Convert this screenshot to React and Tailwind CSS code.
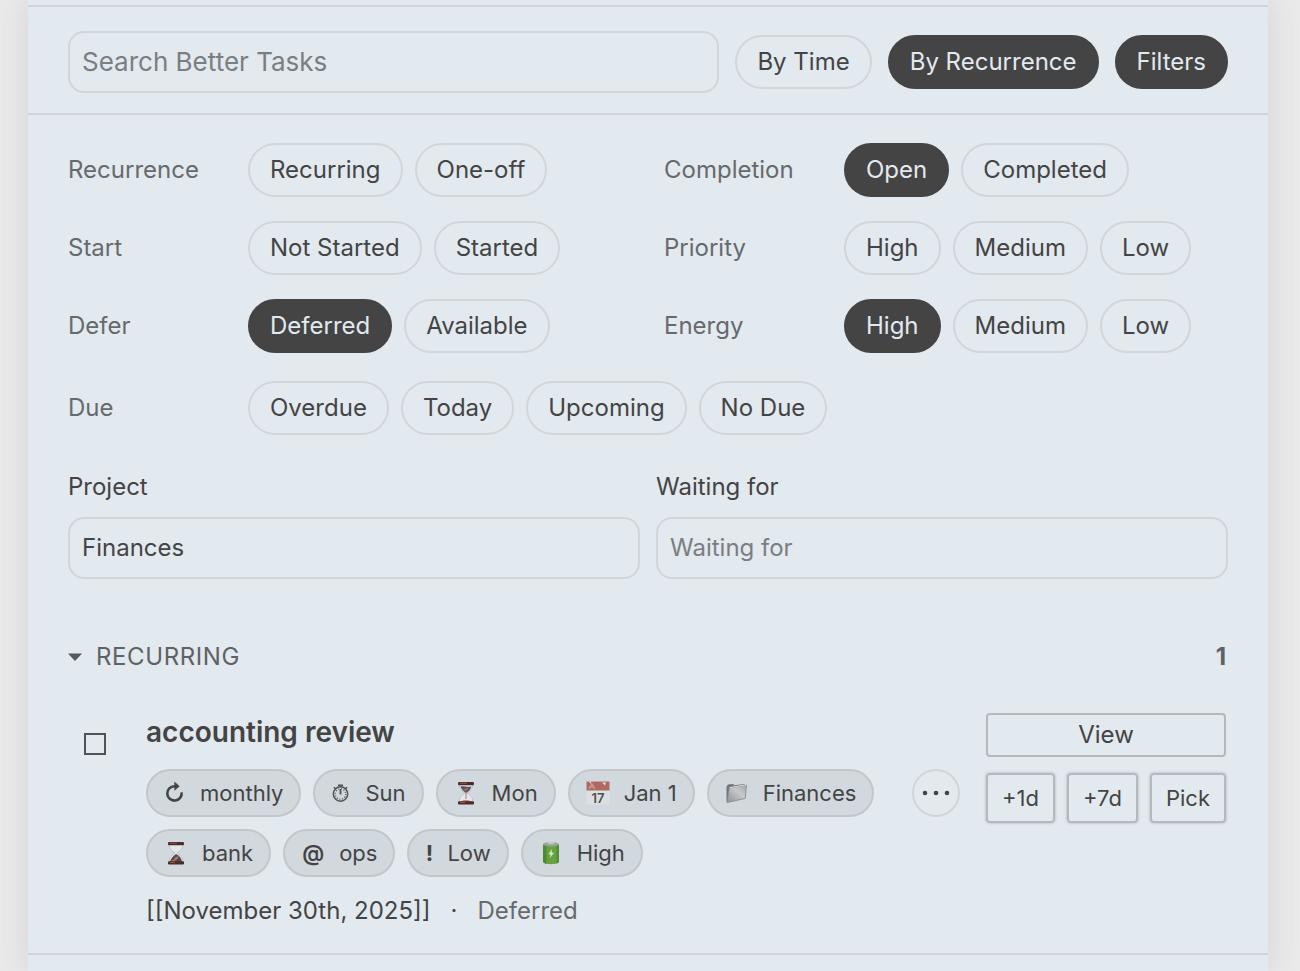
import React, { useState } from "react";
import clsx from "clsx";

const filterGroups = [
  { label: "Recurrence", options: ["Recurring", "One-off"] },
  { label: "Completion", options: ["Open", "Completed"] },
  { label: "Start", options: ["Not Started", "Started"] },
  { label: "Priority", options: ["High", "Medium", "Low"] },
  { label: "Defer", options: ["Deferred", "Available"] },
  { label: "Energy", options: ["High", "Medium", "Low"] },
];

const dueGroup = { label: "Due", options: ["Overdue", "Today", "Upcoming", "No Due"] };

function RepeatIcon() {
  return (
    <svg viewBox="0 0 22 24" className="w-[22px] h-6" fill="none" aria-hidden="true">
      <path d="M12.5 5.2H10.5A7.2 7.2 0 1 0 17.6 11.4" stroke="#444" strokeWidth="2.6" />
      <path d="M10.4 0.4L15.6 5.2L10.4 9.8Z" fill="#444" />
    </svg>
  );
}

function StopwatchIcon() {
  return (
    <svg viewBox="0 0 20 24" className="w-5 h-6" fill="none" stroke="#505254" aria-hidden="true">
      <circle cx="9.5" cy="13" r="7.2" strokeWidth="1.5" />
      <circle cx="9.5" cy="13" r="5.2" strokeWidth="1.3" strokeDasharray="1 1.7" />
      <path d="M9.5 13.5V8" strokeWidth="1.8" />
      <path d="M7 4.2H12M9.5 4V6M3 6.2L4.6 7.8M16 6.2L14.4 7.8" strokeWidth="1.6" />
    </svg>
  );
}

function HourglassIcon({ done }) {
  return (
    <svg viewBox="0 0 24 24" className="size-6" aria-hidden="true">
      <path d="M5 3H19C19 8 16 10 13 12C16 14 19 16 19 21H5C5 16 8 14 11 12C8 10 5 8 5 3Z" fill="#e4e7e9" stroke="#b6babd" strokeWidth="0.8" />
      {done ? (
        <>
          <path d="M12 13C15 14.6 17.6 17 18 21H6C6.4 18 9 15 12 13Z" fill="#4b4d52" />
          <path d="M7 20L11 18L10 17L15 14.8L13.4 18L9 21Z" fill="#c4705f" />
        </>
      ) : (
        <>
          <path d="M6.4 5.6C9 4.6 14 6.6 17.6 5.4C16.6 9 14 10.6 12 12C10 10.6 7.4 9 6.4 5.6Z" fill="#55565b" />
          <path d="M9 8.4L15 6.8L12 10Z" fill="#b8695c" />
          <path d="M12 12V18" stroke="#a25c52" strokeWidth="0.8" />
          <path d="M6 21C8 18.6 16 18.6 18 21Z" fill="#b8695c" />
        </>
      )}
      <rect x="4" y="1" width="16" height="3.2" rx="1.2" fill="#4b2c2a" />
      <rect x="4" y="20.2" width="16" height="3.2" rx="1.2" fill="#4b2c2a" />
      <path d="M6 2.2H13M6 21.5H11" stroke="#a35a50" strokeWidth="0.9" />
    </svg>
  );
}

function CalendarIcon() {
  return (
    <svg viewBox="0 0 24 24" className="size-6" aria-hidden="true">
      <rect x="0.5" y="0.5" width="23" height="23" fill="#dde0e1" />
      <rect x="0.5" y="0.5" width="23" height="9" fill="#ae6a62" />
      <path d="M3 8L6 3L9 8M5 6H8" stroke="#cfa29c" strokeWidth="1.2" fill="none" />
      <path d="M3 0.5H5.5L4.4 3ZM16 1.5L19 4.5L20 1.5Z" fill="#dde0e1" />
      <text x="12" y="21.6" textAnchor="middle" fontSize="13" fontWeight="600" fill="#4e5153">17</text>
    </svg>
  );
}

function FolderIcon() {
  return (
    <svg viewBox="0 0 24 24" className="size-6" aria-hidden="true">
      <defs>
        <linearGradient id="folderFront" x1="0" y1="1" x2="1" y2="0">
          <stop offset="0" stopColor="#8f9294" />
          <stop offset="0.6" stopColor="#c6c9cb" />
          <stop offset="1" stopColor="#a3a6a8" />
        </linearGradient>
      </defs>
      <path d="M1.5 5.5L3 3.6L8 3L9.4 4.2L19.6 3L20.4 4V6L3 21L1.5 20Z" fill="#717476" />
      <path d="M4.2 7L21.4 4L20.4 17.4L2 21.6Z" fill="url(#folderFront)" stroke="#85888a" strokeWidth="0.8" />
      <path d="M4.4 6.6L21 3.8" stroke="#dde0e2" strokeWidth="1" />
    </svg>
  );
}

function BatteryIcon() {
  return (
    <svg viewBox="0 0 24 24" className="size-6" aria-hidden="true">
      <path d="M4 3.4V20.6C4 24 20 24 20 20.6V3.4Z" fill="#66a33e" />
      <path d="M4 3.4V20.6C4 21.8 5.5 22.6 7.5 23V4Z" fill="#4c8b31" />
      <path d="M17.5 4V22.6C19 22.2 20 21.6 20 20.6V3.4Z" fill="#548f38" />
      <ellipse cx="12" cy="3.2" rx="8" ry="2.2" fill="#98a59a" />
      <ellipse cx="12" cy="2" rx="3.4" ry="1.2" fill="#c3c9c5" />
      <path d="M13 8L9.4 13.2H11.6L10.8 17L15 11.8H12.6Z" fill="#d8e6cd" />
    </svg>
  );
}

const chips = [
  { icon: <RepeatIcon />, text: "monthly" },
  { icon: <StopwatchIcon />, text: "Sun" },
  { icon: <HourglassIcon />, text: "Mon" },
  { icon: <CalendarIcon />, text: "Jan 1" },
  { icon: <FolderIcon />, text: "Finances" },
  { icon: <HourglassIcon done />, text: "bank" },
  { icon: <span className="w-6 text-center font-semibold">@</span>, text: "ops" },
  { icon: <span className="w-2 text-center font-bold">!</span>, text: "Low" },
  { icon: <BatteryIcon />, text: "High" },
];

function Pill({ active, onClick, children }) {
  return (
    <button
      type="button"
      aria-pressed={active}
      onClick={onClick}
      className={clsx(
        "h-[54px] shrink-0 rounded-full border-2 px-5 text-2xl whitespace-nowrap",
        active ? "border-[#444] bg-[#444] text-[#e2e9ef]" : "border-[#d1d6db] text-[#444]"
      )}
    >
      {children}
    </button>
  );
}

function FilterGroup({ label, options, selected, onToggle }) {
  return (
    <div role="group" aria-label={label} className="flex items-center">
      <span className="w-[180px] shrink-0 text-2xl text-[#666a6d]">{label}</span>
      <div className="flex flex-wrap gap-3">
        {options.map((option) => (
          <Pill
            key={option}
            active={selected === option}
            onClick={() => onToggle(label, option)}
          >
            {option}
          </Pill>
        ))}
      </div>
    </div>
  );
}

const inputClass =
  "h-[62px] w-full min-w-0 rounded-2xl border-2 border-[#d1d6db] bg-transparent px-3 pb-0.5 text-[#444] placeholder:text-[#7b7e81] outline-none";

const actionClass =
  "rounded-[4px] border-2 border-[#b4b9be] text-[#444]";

export default function App() {
  const [view, setView] = useState("By Recurrence");
  const [showFilters, setShowFilters] = useState(true);
  const [project, setProject] = useState("Finances");
  const [open, setOpen] = useState(true);
  const [selected, setSelected] = useState({
    Completion: "Open",
    Defer: "Deferred",
    Energy: "High",
  });

  const toggle = (label, option) => {
    setSelected((prev) => ({ ...prev, [label]: prev[label] === option ? null : option }));
  };

  return (
    <div className="min-h-screen overflow-hidden bg-[#eaeaea] pl-7 pr-8 font-['Inter',sans-serif] text-[#444]">
      <main className="min-h-screen bg-[#e2e9ef] pt-[5px] shadow-[0_0_32px_rgba(60,75,65,0.14)]">
        <header className="flex items-center gap-4 border-y-2 border-[#d1d6de] px-10 pt-6 pb-5">
          <input
            type="search"
            aria-label="Search Better Tasks"
            placeholder="Search Better Tasks"
            className={clsx(inputClass, "text-[26px]")}
          />
          {["By Time", "By Recurrence"].map((name) => (
            <Pill key={name} active={view === name} onClick={() => setView(name)}>
              {name}
            </Pill>
          ))}
          <Pill active={showFilters} onClick={() => setShowFilters(!showFilters)}>
            Filters
          </Pill>
        </header>

        {showFilters && (
          <section className="px-10 pt-7">
            <div className="grid grid-cols-2 gap-x-8 gap-y-6">
              {filterGroups.map((group) => (
                <FilterGroup key={group.label} {...group} selected={selected[group.label]} onToggle={toggle} />
              ))}
            </div>
            <div className="mt-7">
              <FilterGroup {...dueGroup} selected={selected.Due} onToggle={toggle} />
            </div>

            <div className="mt-9 grid grid-cols-2 gap-4">
              <div>
                <label htmlFor="project" className="mb-3.5 block text-2xl">Project</label>
                <input
                  id="project"
                  value={project}
                  onChange={(e) => setProject(e.target.value)}
                  className={clsx(inputClass, "text-2xl")}
                />
              </div>
              <div>
                <label htmlFor="waiting" className="mb-3.5 block text-2xl">Waiting for</label>
                <input id="waiting" placeholder="Waiting for" className={clsx(inputClass, "text-2xl")} />
              </div>
            </div>
          </section>
        )}

        <section className="mt-[62px] border-b-2 border-[#d1d6de] px-10 pb-[26px]">
          <button
            type="button"
            aria-expanded={open}
            onClick={() => setOpen(!open)}
            className="flex w-full items-center text-2xl text-[#5f6265]"
          >
            <svg viewBox="0 0 14 8" className="mr-3.5 h-2 w-3.5" aria-hidden="true">
              <path d="M0 0.5H14L7 8Z" fill="#55585a" />
            </svg>
            <span className="tracking-wide uppercase">Recurring</span>
            <span className="mr-0.5 ml-auto font-bold">1</span>
          </button>

          {open && (
            <div className="mt-10 flex items-start">
              <input
                type="checkbox"
                aria-label="accounting review"
                className="mt-5 mr-10 ml-4 size-[22px] shrink-0 appearance-none border-2 border-[#505254] checked:bg-[#444]"
              />
              <div className="min-w-0 flex-1">
                <h3 className="text-[28px] leading-[38px] font-semibold">accounting review</h3>
                <div className="mt-[18px] flex items-start justify-between">
                  <ul className="flex flex-wrap gap-3">
                    {chips.map((chip) => (
                      <li
                        key={chip.text}
                        className="flex h-12 items-center gap-3.5 rounded-full border-2 border-[#c3c7cb] bg-[#d1d8de] px-4 text-[22px]"
                      >
                        {chip.icon}
                        {chip.text}
                      </li>
                    ))}
                  </ul>
                  <button
                    type="button"
                    aria-label="More actions"
                    className="ml-5 flex size-12 shrink-0 items-center justify-center rounded-full border-2 border-[#d1d6db]"
                  >
                    <svg viewBox="0 0 28 6" className="h-1.5 w-7" fill="#444" aria-hidden="true">
                      <circle cx="3" cy="3" r="2.3" />
                      <circle cx="14" cy="3" r="2.3" />
                      <circle cx="25" cy="3" r="2.3" />
                    </svg>
                  </button>
                </div>
                <p className="mt-[18px] flex gap-5 text-2xl">
                  <a href="#november-30th-2025">[[November 30th, 2025]]</a>
                  <span>·</span>
                  <span className="text-[#666a6d]">Deferred</span>
                </p>
              </div>
              <div className="ml-[26px] mr-0.5 w-60 shrink-0">
                <button type="button" className={clsx(actionClass, "h-11 w-full text-2xl")}>View</button>
                <div className="mt-4 flex justify-between">
                  {["+1d", "+7d", "Pick"].map((name) => (
                    <button
                      key={name}
                      type="button"
                      className={clsx(actionClass, "h-[50px] px-3.5 text-[22px] shadow-[0_0_3px_rgba(80,90,100,0.4)]")}
                    >
                      {name}
                    </button>
                  ))}
                </div>
              </div>
            </div>
          )}
        </section>
      </main>
    </div>
  );
}
